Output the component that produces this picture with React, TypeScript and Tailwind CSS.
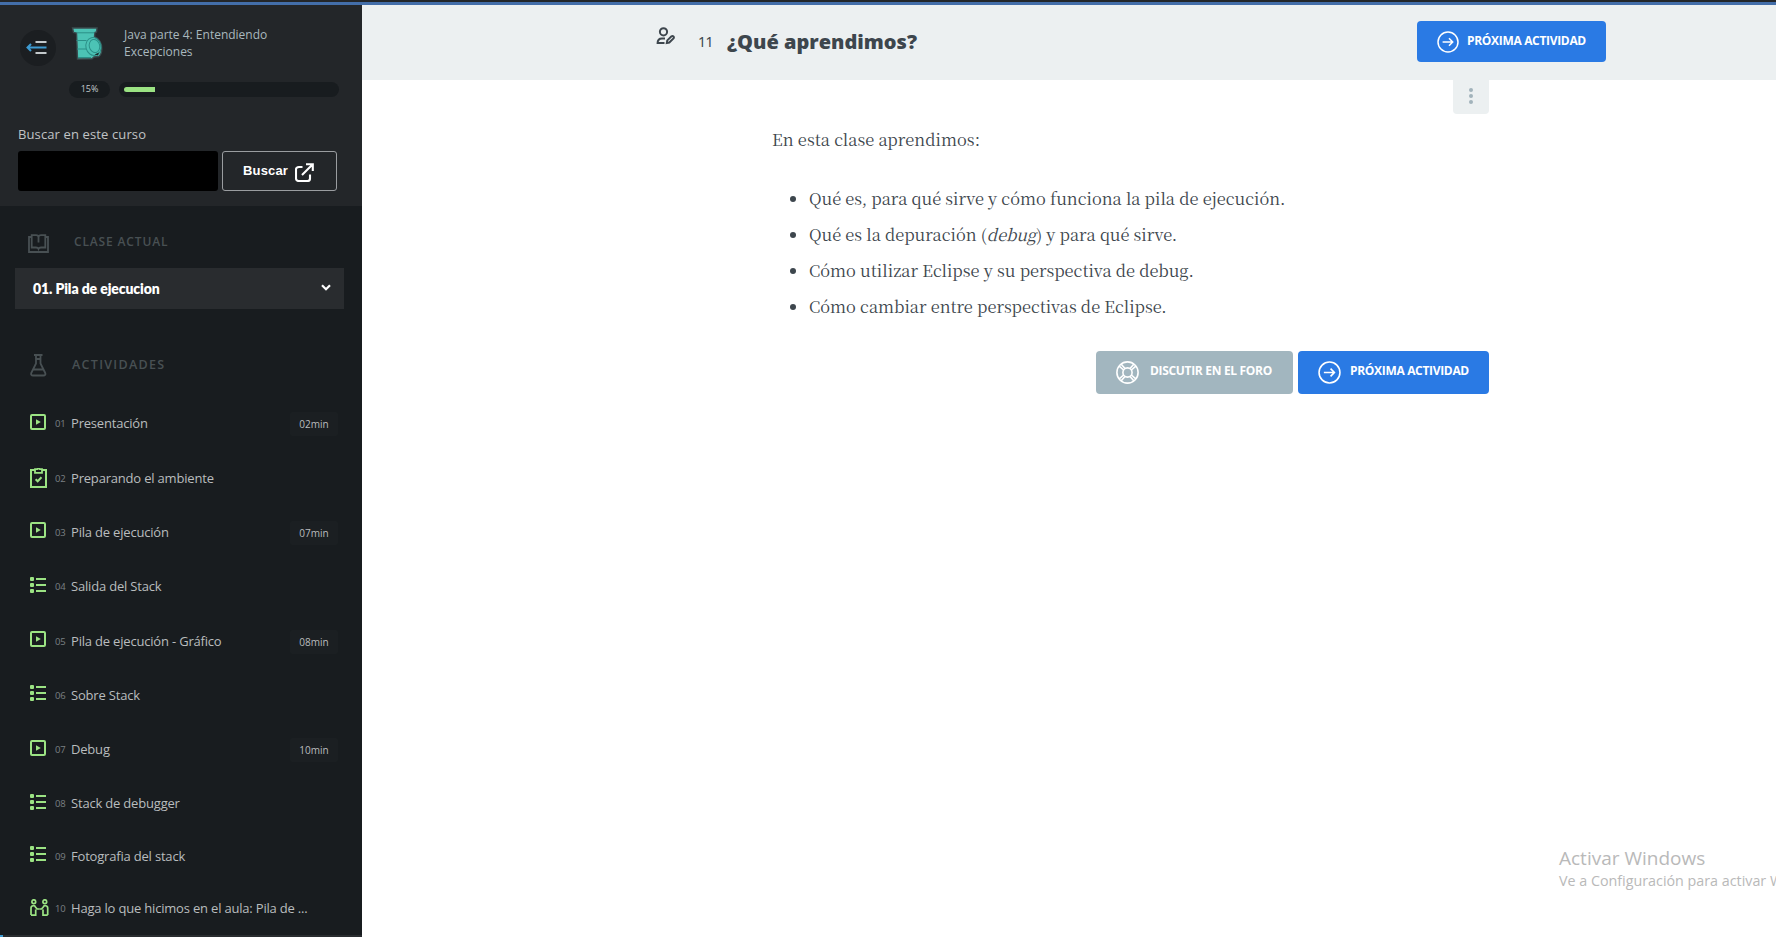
import React from "react";

type Kind = "video" | "task" | "list" | "people";

interface Activity {
  n: string;
  title: string;
  kind: Kind;
  time?: string;
  row: string;
  icon: string;
}

const activities: Activity[] = [
  { n: "01", title: "Presentación", kind: "video", time: "02min", row: "h-[54px]", icon: "mb-[2px]" },
  { n: "02", title: "Preparando el ambiente", kind: "task", row: "h-[54px] mt-px", icon: "mb-0" },
  { n: "03", title: "Pila de ejecución", kind: "video", time: "07min", row: "h-[54px]", icon: "mb-[4px]" },
  { n: "04", title: "Salida del Stack", kind: "list", row: "h-[54px]", icon: "mb-[2px]" },
  { n: "05", title: "Pila de ejecución - Gráfico", kind: "video", time: "08min", row: "h-[54px] mt-px", icon: "mb-[4px]" },
  { n: "06", title: "Sobre Stack", kind: "list", row: "h-[54px]", icon: "mb-[4px]" },
  { n: "07", title: "Debug", kind: "video", time: "10min", row: "h-[54px]", icon: "mb-[2px]" },
  { n: "08", title: "Stack de debugger", kind: "list", row: "h-[54px]", icon: "mb-[2px]" },
  { n: "09", title: "Fotografia del stack", kind: "list", row: "h-[54px] -mt-px", icon: "mb-[4px]" },
  { n: "10", title: "Haga lo que hicimos en el aula: Pila de ...", kind: "people", row: "h-[54px] -mt-[2px]", icon: "mb-[2px]" },
];

function ActivityIcon({ kind }: { kind: Kind }) {
  if (kind === "video")
    return (
      <svg width="16" height="16" viewBox="0 0 16 16" fill="none">
        <rect x="1" y="1" width="14" height="14" rx="1" stroke="#9be383" strokeWidth="2" />
        <path d="M6 5.200 10.800 8 6 10.800Z" fill="#9be383" />
      </svg>
    );
  if (kind === "task")
    return (
      <svg width="18" height="20" viewBox="0 0 18 20" fill="none" stroke="#9be383">
        <path d="M5 2H1v17h15V2H12" strokeWidth="2" />
        <path d="M5 1.200h2.200C7.600.4 9.400.4 9.800 1.200H12v3.600H5Z" strokeWidth="1.800" />
        <path d="M5.600 11.200l2.100 2.100 3.800-4" strokeWidth="2" />
      </svg>
    );
  if (kind === "list")
    return (
      <svg width="16" height="16" viewBox="0 0 16 16" fill="#9be383">
        <rect x="0" y="0" width="4" height="4" rx="1" />
        <rect x="0" y="6" width="4" height="4" rx="1" />
        <rect x="0" y="12" width="4" height="4" rx="1" />
        <rect x="6" y="1" width="10" height="2" />
        <rect x="6" y="7" width="10" height="2" />
        <rect x="6" y="13" width="10" height="2" />
      </svg>
    );
  return (
    <svg width="19" height="17" viewBox="0 0 19 17" fill="none" stroke="#9be383" strokeWidth="1.700">
      <circle cx="3.800" cy="2.700" r="1.900" />
      <circle cx="14.800" cy="2.700" r="1.900" />
      <path d="M1 16.100V9C1 6.300 4.800 6 5.600 8.200L7.200 10H9.300M5.700 10.500v5.600H1" />
      <path d="M17.700 16.100V9c0-2.700-3.800-3-4.600-.8L11.500 10H9.300M13 10.500v5.600h4.700" />
    </svg>
  );
}

function ArrowCircle({ size }: { size: number }) {
  return (
    <svg width={size} height={size} viewBox="0 0 22 22" fill="none" stroke="#fff" strokeWidth="1.500">
      <circle cx="11" cy="11" r="10" />
      <path d="M5.600 11H15.600M12 7.300 15.700 11 12 14.700" />
    </svg>
  );
}

function Lifebuoy() {
  return (
    <svg width="23" height="23" viewBox="0 0 23 23" fill="none" stroke="#fff" strokeWidth="1.600">
      <circle cx="11.500" cy="11.500" r="10.600" />
      <circle cx="11.500" cy="11.500" r="4.600" />
      <path d="M3.200 5.200 7.600 9M5.200 3.200 9 7.600M19.800 5.200 15.400 9M17.800 3.200 14 7.600M3.200 17.800 7.600 14M5.200 19.800 9 15.400M19.800 17.800 15.400 14M17.800 19.800 14 15.400" />
    </svg>
  );
}

function Barrel() {
  return (
    <svg width="34" height="36" viewBox="0 0 34 36">
      <path d="M2.500 2h24.500l-.5 4-1.600.5-.4 4.200c4.500 1.500 8 7 7.300 12.800-.2 3.500-1.500 6-3 7L24 31l-2 1.800L7.500 33 6.500 7 3.500 6.500Z" fill="#4cc3b5" stroke="#3a4b4e" strokeWidth="1.400" />
      <g fill="none" stroke="#2b8f87" strokeWidth="1">
        <path d="M6.500 6.800h18M6.500 14.500h10M7 23h9M8 31.500h13" />
        <ellipse cx="23.500" cy="20.500" rx="7.600" ry="9" transform="rotate(-14 23.500 20.500)" />
        <ellipse cx="24.500" cy="20" rx="5.200" ry="6.600" transform="rotate(-14 24.500 20)" />
      </g>
      <path d="M24.500 28.600l4.500-2-1 2.800Z" fill="#1b2a2c" />
    </svg>
  );
}

function Sidebar() {
  return (
    <aside className="flex w-[362px] shrink-0 flex-col overflow-hidden bg-[#181c1f]">
      <div className="h-[201px] shrink-0 bg-[#232629]">
        <div className="flex h-[61px] pt-[21px] pl-[20px]">
          <div className="mt-[4px] flex size-[36px] items-center justify-center rounded-full bg-[#1b1e21] pr-[3px]">
            <svg width="21" height="14" viewBox="0 0 21 14" fill="none" strokeWidth="2">
              <path d="M9.500 1H20.500M9.500 12H20.500" stroke="#c3c9cc" />
              <path d="M1.500 6.500H20.500M5 3 1.500 6.500l3.500 3.500" stroke="#3d9ad1" />
            </svg>
          </div>
          <div className="ml-[14px]"><Barrel /></div>
          <p className="ml-[20px] w-[180px] text-[12px] leading-[17px] text-[#a9b8be]">Java parte 4: Entendiendo Excepciones</p>
        </div>
        <div className="mt-[14px] ml-[69px] flex h-[18px] items-center">
          <span className="flex h-[17px] w-[41px] items-center justify-center rounded-full bg-[#181c1f] text-[9px] text-[#c3c9cc]">15%</span>
          <span className="ml-[9px] flex h-[15px] w-[220px] items-center rounded-full bg-[#181c1f] pl-[5px]">
            <span className="h-[5px] w-[31px] rounded-l-full bg-[#9be383]" />
          </span>
        </div>
        <p className="mt-[26px] ml-[18px] text-[13px] leading-[20px] tracking-[0.120px] text-[#c0c3c5]">Buscar en este curso</p>
        <div className="mt-[7px] ml-[18px] flex gap-[4px]">
          <div className="h-[40px] w-[200px] rounded-[3px] bg-black" />
          <button className="flex h-[40px] w-[115px] items-center rounded-[3px] border border-[#9a9da0] pl-[20px] font-['Liberation_Sans',sans-serif] text-[13px] font-bold tracking-[0.150px] text-white">
            Buscar
            <svg className="mt-[2px] ml-[7px]" width="19" height="19" viewBox="0 0 19 19" fill="none" stroke="#fff" strokeWidth="2.100">
              <path d="M7.500 4H4C2 4 1 5 1 6.500V15.500C1 17 2 18 3.500 18H12.500C14 18 15 17 15 15.500V11.500M11 1.200H17.800V8M17.500 1.500 7 12" />
            </svg>
          </button>
        </div>
      </div>

      <div className="mt-[26px] flex h-[20px] shrink-0 items-center pl-[28px] text-[12px] font-semibold tracking-[0.850px] text-[#485053]">
        <svg className="mt-[2px]" width="21" height="19" viewBox="0 0 21 19" fill="none" stroke="#485053" strokeWidth="1.800">
          <path d="M3.500 3H1v15h19V3h-2.500" />
          <path d="M3.700 1.200H8c1.500 0 2.500.8 2.500 2 0-1.200 1-2 2.500-2h4.300v12.300H13c-1.300 0-2.100.4-2.500 1.400-.4-1-1.200-1.400-2.500-1.400H3.700Z M10.500 3v5.500" />
        </svg>
        <span className="ml-[25px]">CLASE ACTUAL</span>
      </div>
      <div className="mt-[16px] ml-[15px] flex h-[41px] w-[329px] shrink-0 items-center justify-between bg-[#292c2f] pr-[13px] pl-[18px] text-white">
        <span className="font-['Lato',sans-serif] text-[14px] font-extrabold tracking-[-0.100px]">01. Pila de ejecucion</span>
        <svg className="mb-[2px]" width="10" height="7" viewBox="0 0 10 7" fill="none" stroke="#fff" strokeWidth="2.200">
          <path d="M1 1.200 5 5.200 9 1.200" />
        </svg>
      </div>

      <div className="mt-[44px] flex h-[24px] shrink-0 items-center pl-[30px] text-[12.500px] font-semibold tracking-[1.300px] text-[#485053]">
        <svg width="17" height="23" viewBox="0 0 17 23" fill="none" stroke="#485053" strokeWidth="1.800">
          <path d="M4 1H12.500M6 1v8.500L1.500 18.500C.5 20.500 1.500 21.500 3 21.500H13.500C15 21.500 16 20.500 15 18.500L10.500 9.500V1M3.500 15.500H13M6 5h4" />
        </svg>
        <span className="ml-[25px]">ACTIVIDADES</span>
      </div>

      <div className="mt-[19px] flex shrink-0 flex-col pl-[30px]">
        {activities.map((a) => (
          <div key={a.n} className={"flex shrink-0 items-center " + a.row}>
            <span className={"w-[25px] shrink-0 " + a.icon}><ActivityIcon kind={a.kind} /></span>
            <span className="mt-[2px] w-[16px] shrink-0 text-[9.500px] tracking-[-0.300px] text-[#7b8083]">{a.n}</span>
            <span className="mt-[2px] w-[219px] shrink-0 text-[13px] tracking-[-0.190px] whitespace-nowrap text-[#b9bcbe]">{a.title}</span>
            {a.time && (
              <span className="mt-[2px] flex h-[24px] w-[48px] items-center justify-center rounded-[2px] bg-[#1b1f22] text-[10px] text-[#b9bcbe]">{a.time}</span>
            )}
          </div>
        ))}
      </div>
    </aside>
  );
}

export default function App() {
  return (
    <div className="relative flex h-[937px] w-[1776px] flex-col overflow-hidden bg-white font-['Open_Sans',sans-serif]">
      <div className="h-[5px] shrink-0 border-b-[3px] border-[#436ea9] bg-[#232629]" />
      <div className="flex min-h-0 flex-1">
        <Sidebar />
        <main className="flex flex-1 flex-col">
          <header className="flex h-[75px] shrink-0 bg-[#ecf0f1]">
            <svg className="mt-[22px] ml-[294px] shrink-0" width="19" height="18" viewBox="0 0 19 18" fill="none" stroke="#3d464d" strokeWidth="2">
              <circle cx="7.500" cy="4.800" r="3.600" />
              <path d="M8.500 16H1.600c0-3 1.900-4.600 4.400-4.600h3M10.800 16l.5-2.600 4.200-4c1.500-1 3 .6 2 2l-4.200 4.100Z" />
            </svg>
            <span className="mt-[27px] ml-[23px] w-[29px] font-['Noto_Sans',sans-serif] text-[14px] leading-[20px] tracking-[-0.400px] text-[#3d464d]">11</span>
            <h1 className="mt-[22px] w-[690px] text-[20px] leading-[30px] font-extrabold text-[#3d464d]">¿Qué aprendimos?</h1>
            <button className="mt-[16px] flex h-[41px] w-[189px] items-center rounded-[4px] bg-[#2a7ae4] pl-[20px] text-[12px] font-bold tracking-[-0.320px] text-white">
              <ArrowCircle size={22} />
              <span className="mb-[2px] ml-[8px]">PRÓXIMA ACTIVIDAD</span>
            </button>
          </header>
          <div className="ml-[410px] flex w-[717px] flex-col">
            <div className="flex h-[34px] w-[36px] flex-col items-center justify-center gap-[2px] self-end rounded-b-[4px] bg-[#ecf0f1] pb-[2px]">
              <i className="size-[4px] rounded-full bg-[#a2b3bb]" />
              <i className="size-[4px] rounded-full bg-[#a2b3bb]" />
              <i className="size-[4px] rounded-full bg-[#a2b3bb]" />
            </div>
            <div className="font-['Noto_Serif_CJK_SC','Noto_Serif','Liberation_Serif',serif] text-[16.420px] leading-[36px] text-[#3d464d]">
              <p className="mt-[7px] tracking-[0.040px]">En esta clase aprendimos:</p>
              <ul className="mt-[23px] list-disc pl-[37px]">
                <li>Qué es, para qué sirve y cómo funciona la pila de ejecución.</li>
                <li>Qué es la depuración (<em>debug</em>) y para qué sirve.</li>
                <li>Cómo utilizar Eclipse y su perspectiva de debug.</li>
                <li>Cómo cambiar entre perspectivas de Eclipse.</li>
              </ul>
            </div>
            <div className="mt-[27px] flex justify-end gap-[5px] text-[12px] font-bold tracking-[-0.320px] text-white">
              <button className="flex h-[43px] w-[197px] items-center rounded-[4px] bg-[#a2b6bf] pl-[20px]">
                <Lifebuoy />
                <span className="mb-[3px] ml-[11px]">DISCUTIR EN EL FORO</span>
              </button>
              <button className="flex h-[43px] w-[191px] items-center rounded-[4px] bg-[#2a7ae4] pl-[20px]">
                <ArrowCircle size={23} />
                <span className="mb-[3px] ml-[9px]">PRÓXIMA ACTIVIDAD</span>
              </button>
            </div>
          </div>
        </main>
      </div>
      <div className="absolute bottom-0 left-0 flex h-[2px] w-[362px] bg-[#292c2f]">
        <span className="h-[2px] w-[3px] bg-[#3d9ad1]" />
      </div>
      <div className="absolute top-[844px] left-[1559px] whitespace-nowrap text-[#b9b9b9]">
        <p className="text-[19px] leading-[28px]">Activar Windows</p>
        <p className="text-[14.300px] leading-[18px]">Ve a Configuración para activar W</p>
      </div>
    </div>
  );
}
